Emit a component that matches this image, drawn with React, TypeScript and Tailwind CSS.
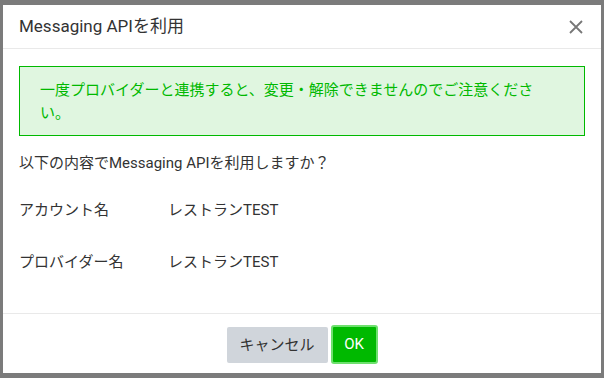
import React from "react";

const rows = [
  { label: "アカウント名", value: "レストランTEST" },
  { label: "プロバイダー名", value: "レストランTEST" },
];

const App = () => {
  return (
    <div
      className="w-[604px] h-[378px] bg-[#7b7b7b] pt-[5px] pl-[3px] overflow-hidden"
      style={{ fontFamily: "Roboto, 'Noto Sans CJK JP', sans-serif" }}
    >
      <div className="w-[598px] h-[368px] bg-white flex flex-col">
        <div className="h-[44px] flex items-center justify-between pl-[16px] pr-[18px] border-b border-[#e9e9e9]">
          <h2 className="text-[17px] text-[#333333]">Messaging APIを利用</h2>
          <svg width="14" height="14" viewBox="0 0 14 14" className="mt-[1px]">
            <path d="M1 1L13 13M13 1L1 13" stroke="#777777" strokeWidth="1.8" />
          </svg>
        </div>

        <div className="flex-1 px-[16px] pt-[17px]">
          <div className="border border-[#00b900] bg-[#e0f6e0] pl-[20px] pr-[20px] pt-[12px] pb-[10px] text-[15px] leading-[23px] text-[#00b900]">
            一度プロバイダーと連携すると、変更・解除できませんのでご注意くださ
            <br />
            い。
          </div>
          <p className="mt-[16px] text-[15px] text-[#333333]">
            以下の内容でMessaging APIを利用しますか？
          </p>
          <div className="mt-[24px] flex flex-col gap-[30px]">
            {rows.map((row) => (
              <div key={row.label} className="flex text-[15px] leading-[22px] text-[#333333]">
                <span className="w-[149px]">{row.label}</span>
                <span>{row.value}</span>
              </div>
            ))}
          </div>
        </div>

        <div className="h-[60px] border-t border-[#e9e9e9] flex items-start justify-center gap-[3px] pt-[11px]">
          <button className="mt-[2px] h-[36px] w-[101px] rounded-[2px] bg-[#d0d5db] text-[15px] text-[#333333]">
            キャンセル
          </button>
          <button className="h-[39px] w-[47px] rounded-[3px] border-2 border-[#6ee06e] bg-[#00b900] text-[15px] text-white">
            OK
          </button>
        </div>
      </div>
    </div>
  );
};

export default App;
